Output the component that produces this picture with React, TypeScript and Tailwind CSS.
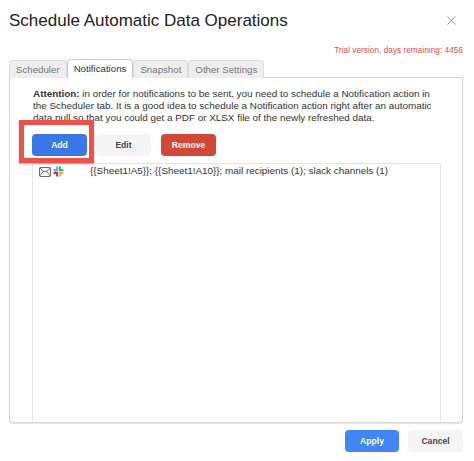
import React from 'react';
import { X } from 'lucide-react';

const tabs = ['Scheduler', 'Notifications', 'Snapshot', 'Other Settings'];

const SlackIcon = () => (
  <svg width="11" height="11" viewBox="0 0 12 12" fill="none" strokeWidth="2.2" strokeLinecap="round">
    <path d="M4.5 1.5v3h-3" stroke="#36c5f0" />
    <path d="M7.5 1.5v3.2" stroke="#2eb67d" />
    <path d="M10.5 4.5h-3" stroke="#2eb67d" />
    <path d="M7.5 10.5v-3h3" stroke="#ecb22e" />
    <path d="M4.5 7.5v3" stroke="#e01e5a" />
    <path d="M1.5 7.5h3" stroke="#e01e5a" />
  </svg>
);

const App: React.FC = () => {
  return (
    <div className="relative flex h-[461px] w-[474px] flex-col overflow-hidden bg-white pr-[11px] pl-[9px] font-['Liberation_Sans',Arial,sans-serif]">
      <div className="flex h-[41px] shrink-0 items-center justify-between pr-[4px]">
        <h1 className="text-[17px] leading-none font-normal text-[#222]">Schedule Automatic Data Operations</h1>
        <X size={15} strokeWidth={1.1} className="text-[#666]" />
      </div>

      <p className="mt-[3px] h-[14px] text-right text-[8.3px] leading-[12px] text-[#d9534a]">
        Trial version, days remaining: 4456
      </p>

      <div className="z-10 mt-[1px] -mb-px flex h-[19px] shrink-0 items-end">
        {tabs.map((tab) => (
          <div
            key={tab}
            className={
              tab === 'Notifications'
                ? 'flex h-[19px] items-center rounded-t-sm border border-b-0 border-[#ccc] bg-white px-[6px] pt-px text-[9.7px] text-[#333]'
                : 'flex h-[18px] items-center rounded-t-sm border border-b-0 border-[#ddd] bg-[#eee] px-[6px] pt-px text-[9.7px] text-[#777]'
            }
          >
            {tab}
          </div>
        ))}
      </div>

      <div className="flex h-[346px] shrink-0 flex-col rounded-b-sm border border-[#d4d4d4] bg-white shadow-[0_1px_1px_rgba(0,0,0,0.1)]">
        <div className="pt-[10px] pr-[21px] pl-[23px] text-[9.9px] leading-[12px] text-[#333]">
          <b>Attention:</b> in order for notifications to be sent, you need to schedule a Notification action in the Scheduler tab. It is a good idea to schedule a Notification action right after an automatic data pull so that you could get a PDF or XLSX file of the newly refreshed data.
        </div>

        <div className="mt-[10px] flex gap-[9px] pl-[22px]">
          <button className="h-[22px] w-[55px] rounded-sm bg-[#3b78e7] text-[8.6px] font-bold text-white">Add</button>
          <button className="h-[22px] w-[55px] rounded-sm bg-[#f5f5f5] text-[8.6px] font-bold text-[#444]">Edit</button>
          <button className="ml-px h-[22px] w-[55px] rounded-sm bg-[#d14836] text-[8.6px] font-bold text-white">Remove</button>
        </div>

        <div className="mt-[7px] mr-[21px] ml-[22px] flex-1 border-x border-t border-[#e4e4e4] px-[6px]">
          <div className="flex h-[15px] items-center">
            <svg width="12" height="10" viewBox="0 0 12 10" fill="none" stroke="#444" strokeWidth="0.8">
              <rect x="0.5" y="0.5" width="11" height="9" rx="1" />
              <path d="M0.7 1l5.3 4.3L11.3 1M0.7 9l3.8-4.9M11.3 9L7.5 4.1" />
            </svg>
            <span className="ml-[2px]"><SlackIcon /></span>
            <span className="ml-[26px] text-[9.9px] text-[#333]">
              {'{{Sheet1!A5}}; {{Sheet1!A10}}; mail recipients (1); slack channels (1)'}
            </span>
          </div>
        </div>
      </div>

      <div className="mt-[7px] flex justify-end gap-[9px]">
        <button className="h-[22px] w-[54px] rounded-sm bg-[#4285f4] text-[8.6px] font-bold text-white">Apply</button>
        <button className="h-[22px] w-[55px] rounded-sm bg-[#f5f5f5] text-[8.6px] font-bold text-[#444]">Cancel</button>
      </div>

      {/* callout around the Add button */}
      <div className="absolute top-[120px] left-[19px] h-[43px] w-[75px] border-[5px] border-[#ef5148] shadow-[0_1px_2px_rgba(0,0,0,0.3)]" />
    </div>
  );
};

export default App;
